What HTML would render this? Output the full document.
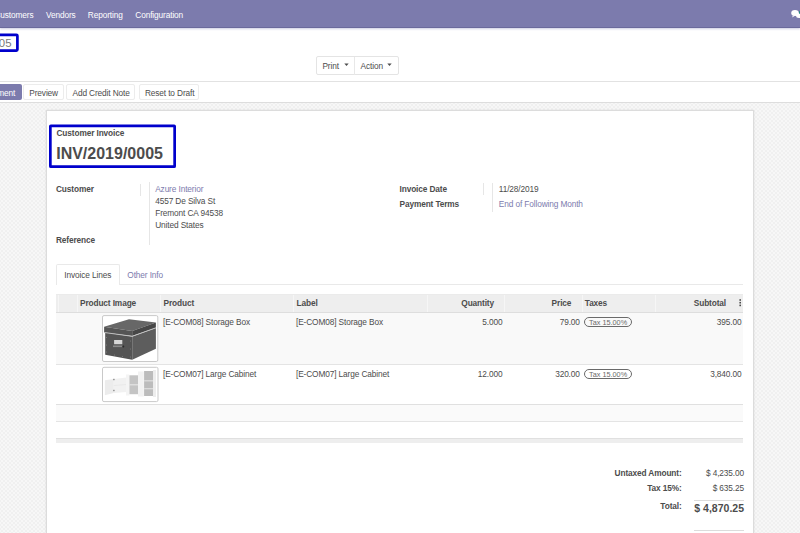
<!DOCTYPE html>
<html><head><meta charset="utf-8"><style>
html,body{margin:0;padding:0}
body{width:800px;height:533px;overflow:hidden;position:relative;background:#fff;font-family:"Liberation Sans",sans-serif;color:#4c4c4c}
.t{position:absolute;white-space:nowrap}
.r{position:absolute}
</style></head><body>
<div class="r" style="left:0px;top:0px;width:800px;height:26.5px;background:#7c7bad;border-bottom:1px solid #6b6a9c;box-shadow:0 1px 2px rgba(110,108,170,0.35)"></div>
<svg class="r" style="left:0;top:30px" width="24" height="26"><rect x="-10" y="4.85" width="27.4" height="15.7" rx="1" fill="none" stroke="#0000cc" stroke-width="2.7"/></svg>
<div class="r" style="left:316.3px;top:56.2px;width:83px;height:18.6px;border:1px solid #e4e4e4;border-radius:2px;box-sizing:border-box;background:#fff"></div>
<div class="r" style="left:354px;top:56.5px;width:1px;height:18px;background:#e8e8e8"></div>
<svg class="r" style="left:343.5px;top:63px" width="5" height="4"><path d="M0.3 0.6H4.7L2.5 3Z" fill="#4c4c4c"/></svg>
<svg class="r" style="left:387.3px;top:63px" width="5" height="4"><path d="M0.3 0.6H4.7L2.5 3Z" fill="#4c4c4c"/></svg>
<div class="r" style="left:0px;top:81px;width:800px;height:1px;background:#e2e2e2"></div>
<div class="r" style="left:-40px;top:84.4px;width:61.5px;height:15.6px;background:#7c7bad;border-radius:2px"></div>
<div class="r" style="left:23.1px;top:84.4px;width:40.9px;height:15.6px;border:1px solid #ececec;border-radius:2px;box-sizing:border-box;background:#fff"></div>
<div class="r" style="left:66.3px;top:84.4px;width:68.89999999999999px;height:15.6px;border:1px solid #ececec;border-radius:2px;box-sizing:border-box;background:#fff"></div>
<div class="r" style="left:138.7px;top:84.4px;width:60.60000000000002px;height:15.6px;border:1px solid #ececec;border-radius:2px;box-sizing:border-box;background:#fff"></div>
<div class="r" style="left:0px;top:102px;width:800px;height:431px;background-color:#f0f0f0;background-image:radial-gradient(circle,#f7f7f7 0.8px,transparent 1.3px),radial-gradient(circle,#f7f7f7 0.8px,transparent 1.3px);background-size:4px 4px;background-position:0 0,2px 2px;border-top:1px solid #dddddd"></div>
<div class="r" style="left:46.2px;top:110.2px;width:707.6px;height:440px;background:#fff;border:1px solid #dcdcdc;box-sizing:border-box;box-shadow:0 0 2px rgba(0,0,0,0.10)"></div>
<svg class="r" style="left:45px;top:120px" width="136" height="52"><rect x="5.35" y="5.85" width="124.3" height="40.8" rx="0.5" fill="none" stroke="#0000cc" stroke-width="2.7"/></svg>
<div class="r" style="left:140px;top:183.5px;width:1px;height:12.5px;background:#e6e6e6"></div>
<div class="r" style="left:149.3px;top:182px;width:1px;height:63px;background:#e6e6e6"></div>
<div class="r" style="left:483px;top:183px;width:1px;height:12px;background:#e6e6e6"></div>
<div class="r" style="left:492.2px;top:183px;width:1px;height:29px;background:#e6e6e6"></div>
<div class="r" style="left:56px;top:283.7px;width:687px;height:1px;background:#e9e9e9"></div>
<div class="r" style="left:56px;top:264px;width:64px;height:20.7px;background:#fff;border:1px solid #e9e9e9;border-bottom:none;border-radius:2px 2px 0 0;box-sizing:border-box"></div>
<div class="r" style="left:56px;top:294px;width:687px;height:18.5px;background:#eeeeee;border-top:1px solid #ebebeb;border-bottom:1px solid #dedede;box-sizing:border-box"></div>
<div class="r" style="left:58px;top:295px;width:1px;height:17px;background:#f6f6f6"></div>
<div class="r" style="left:76.6px;top:295px;width:1px;height:17px;background:#f6f6f6"></div>
<div class="r" style="left:160px;top:295px;width:1px;height:17px;background:#f6f6f6"></div>
<div class="r" style="left:293px;top:295px;width:1px;height:17px;background:#f6f6f6"></div>
<div class="r" style="left:427.3px;top:295px;width:1px;height:17px;background:#f6f6f6"></div>
<div class="r" style="left:504px;top:295px;width:1px;height:17px;background:#f6f6f6"></div>
<div class="r" style="left:582.3px;top:295px;width:1px;height:17px;background:#f6f6f6"></div>
<div class="r" style="left:655px;top:295px;width:1px;height:17px;background:#f6f6f6"></div>
<svg class="r" style="left:739px;top:299px" width="3" height="9"><rect x="0.4" y="0.2" width="1.6" height="1.6" fill="#4c4c4c"/><rect x="0.4" y="2.9" width="1.6" height="1.6" fill="#4c4c4c"/><rect x="0.4" y="5.6" width="1.6" height="1.6" fill="#4c4c4c"/></svg>
<div class="r" style="left:56px;top:312.5px;width:687px;height:52px;background:#f9f9f9"></div>
<div class="r" style="left:56px;top:364px;width:687px;height:1px;background:#e4e4e4"></div>
<div class="r" style="left:56px;top:405px;width:687px;height:16.5px;background:#fafafa"></div>
<div class="r" style="left:56px;top:404.3px;width:687px;height:1.2px;background:#e0e0e0"></div>
<div class="r" style="left:56px;top:421px;width:687px;height:1px;background:#e4e4e4"></div>
<div class="r" style="left:56px;top:437.5px;width:687px;height:5.3px;background:#eeeeee;border-top:1px solid #e0e0e0;box-sizing:border-box"></div>
<div class="r" style="left:584px;top:316.90000000000003px;width:48px;height:10.3px;border:1px solid #6a6a6a;border-radius:6px;box-sizing:border-box"></div>
<div class="r" style="left:584px;top:368.90000000000003px;width:48px;height:10.3px;border:1px solid #6a6a6a;border-radius:6px;box-sizing:border-box"></div>
<svg class="r" style="left:100px;top:313px" width="62" height="52" viewBox="100 313 62 52">
<rect x="102.5" y="315.6" width="55.3" height="45.9" rx="1.5" fill="#fff" stroke="#c9c9c9" stroke-width="1"/>
<polygon points="104.1,326.7 129,319.2 155.9,322.5 132.2,331" fill="#676767"/>
<polygon points="104.1,326.7 132.2,331 132.2,336.1 104.1,332.4" fill="#555"/>
<polygon points="132.2,331 155.9,322.5 155.9,327.7 132.2,336.1" fill="#474747"/>
<polygon points="105.2,332.6 132.2,336.4 132.2,359.7 105.2,354.7" fill="#545454"/>
<polygon points="132.2,336.4 155.9,328 155.9,348.7 132.2,359.7" fill="#5d5d5d"/>
<polyline points="104.3,332.5 132.2,336.3 155.9,327.8" fill="none" stroke="#c4c4c4" stroke-width="0.9"/>
<rect x="114.1" y="340" width="8.2" height="4.2" fill="#d6d6d6"/>
<rect x="113" y="345.5" width="9.5" height="1.6" fill="#8a8a8a"/>
<circle cx="123.3" cy="346.5" r="1" fill="#2a2a2a"/>
<circle cx="106.6" cy="337.5" r="0.45" fill="#999"/><circle cx="106.6" cy="345" r="0.45" fill="#999"/><circle cx="106.6" cy="352" r="0.45" fill="#999"/>
<circle cx="130.5" cy="341" r="0.45" fill="#999"/><circle cx="130.5" cy="349" r="0.45" fill="#999"/><circle cx="130.5" cy="357" r="0.45" fill="#999"/>
<circle cx="114.5" cy="355" r="0.45" fill="#999"/><circle cx="122.5" cy="356.5" r="0.45" fill="#999"/>
</svg>
<svg class="r" style="left:100px;top:364px" width="62" height="41" viewBox="100 364 62 41">
<rect x="102.5" y="367.3" width="55.5" height="34.3" rx="1.5" fill="#fff" stroke="#c9c9c9" stroke-width="1"/>
<polygon points="104.9,380.3 113.8,378.9 113.8,393 104.9,395.3" fill="#ececec"/>
<polygon points="113.8,378.9 126.5,377.5 126.5,392 113.8,393" fill="#f1f1f1"/>
<line x1="113.8" y1="385.5" x2="126.5" y2="384.5" stroke="#e2e2e2" stroke-width="0.6"/>
<rect x="113.3" y="378.8" width="1.2" height="1.4" fill="#777"/>
<rect x="113.3" y="389.8" width="1.2" height="1.4" fill="#777"/>
<rect x="126" y="374.5" width="3.4" height="21" fill="#f4f4f4"/>
<rect x="129.4" y="375.3" width="8.6" height="18.9" fill="#c4c4c4"/>
<rect x="129.4" y="384.2" width="8.6" height="1.2" fill="#e4e4e4"/>
<rect x="138" y="371.5" width="5.8" height="25" fill="#f2f2f2"/>
<rect x="144.1" y="371" width="8.9" height="25" fill="#bcbcbc"/>
<rect x="144.1" y="380.2" width="8.9" height="1.2" fill="#dedede"/>
<rect x="144.1" y="388.1" width="8.9" height="1.2" fill="#dedede"/>
<rect x="153" y="370" width="3" height="27" fill="#ededed"/>
</svg>
<div class="r" style="left:694px;top:500.3px;width:49.6px;height:1px;background:#dcdcdc"></div>
<div class="r" style="left:694px;top:530px;width:49.6px;height:1px;background:#dcdcdc"></div>
<svg class="r" style="left:790px;top:8px" width="11" height="12"><ellipse cx="5" cy="5" rx="3.8" ry="3" fill="#fff"/><path d="M3 7.5 L2 9.5 L5 7.8Z" fill="#fff"/><ellipse cx="9" cy="7.5" rx="3" ry="2.5" fill="#fff"/></svg>
<div class="r" style="left:798.8px;top:10.5px;width:3px;height:3.2px;background:#1f8a80;border-radius:1px"></div>
<div class="t" style="left:-5.6px;top:10.12px;font-size:8.3px;line-height:10px;font-weight:400;color:#ffffff;letter-spacing:-0.12px;">Customers</div>
<div class="t" style="left:46px;top:10.12px;font-size:8.3px;line-height:10px;font-weight:400;color:#ffffff;letter-spacing:-0.12px;">Vendors</div>
<div class="t" style="left:87.8px;top:10.12px;font-size:8.3px;line-height:10px;font-weight:400;color:#ffffff;letter-spacing:-0.12px;">Reporting</div>
<div class="t" style="left:135.3px;top:10.12px;font-size:8.3px;line-height:10px;font-weight:400;color:#ffffff;letter-spacing:-0.12px;">Configuration</div>
<div class="t" style="left:-1.2px;top:35.75px;font-size:11.4px;line-height:14px;font-weight:400;color:#7a7a7a;">05</div>
<div class="t" style="left:322.4px;top:61.32px;font-size:8.3px;line-height:10px;font-weight:400;color:#4c4c4c;letter-spacing:-0.12px;">Print</div>
<div class="t" style="left:360.6px;top:61.32px;font-size:8.3px;line-height:10px;font-weight:400;color:#4c4c4c;letter-spacing:-0.12px;">Action</div>
<div class="t" style="right:784.8px;top:88.12px;font-size:8.3px;line-height:10px;font-weight:400;color:#ffffff;letter-spacing:-0.12px;">Register Payment</div>
<div class="t" style="left:29.3px;top:88.12px;font-size:8.3px;line-height:10px;font-weight:400;color:#4c4c4c;letter-spacing:-0.12px;">Preview</div>
<div class="t" style="left:72.5px;top:88.12px;font-size:8.3px;line-height:10px;font-weight:400;color:#4c4c4c;letter-spacing:-0.12px;">Add Credit Note</div>
<div class="t" style="left:144.89999999999998px;top:88.12px;font-size:8.3px;line-height:10px;font-weight:400;color:#4c4c4c;letter-spacing:-0.12px;">Reset to Draft</div>
<div class="t" style="left:56.5px;top:127.92px;font-size:8.3px;line-height:10px;font-weight:700;color:#4c4c4c;letter-spacing:-0.12px;">Customer Invoice</div>
<div class="t" style="left:56.2px;top:144.36px;font-size:16px;line-height:20px;font-weight:700;color:#4c4c4c;">INV/2019/0005</div>
<div class="t" style="left:56px;top:184.42px;font-size:8.3px;line-height:10px;font-weight:700;color:#4c4c4c;letter-spacing:-0.12px;">Customer</div>
<div class="t" style="left:56px;top:234.62px;font-size:8.3px;line-height:10px;font-weight:700;color:#4c4c4c;letter-spacing:-0.12px;">Reference</div>
<div class="t" style="left:155.2px;top:184.42px;font-size:8.3px;line-height:10px;font-weight:400;color:#7c7bad;letter-spacing:-0.12px;">Azure Interior</div>
<div class="t" style="left:155.2px;top:196.32px;font-size:8.3px;line-height:10px;font-weight:400;color:#4c4c4c;letter-spacing:-0.12px;">4557 De Silva St</div>
<div class="t" style="left:155.2px;top:207.92px;font-size:8.3px;line-height:10px;font-weight:400;color:#4c4c4c;letter-spacing:-0.12px;">Fremont CA 94538</div>
<div class="t" style="left:155.2px;top:219.52px;font-size:8.3px;line-height:10px;font-weight:400;color:#4c4c4c;letter-spacing:-0.12px;">United States</div>
<div class="t" style="left:399.5px;top:183.62px;font-size:8.3px;line-height:10px;font-weight:700;color:#4c4c4c;letter-spacing:-0.12px;">Invoice Date</div>
<div class="t" style="left:399.5px;top:199.12px;font-size:8.3px;line-height:10px;font-weight:700;color:#4c4c4c;letter-spacing:-0.12px;">Payment Terms</div>
<div class="t" style="left:498.8px;top:183.62px;font-size:8.3px;line-height:10px;font-weight:400;color:#4c4c4c;letter-spacing:-0.12px;">11/28/2019</div>
<div class="t" style="left:498.8px;top:199.12px;font-size:8.3px;line-height:10px;font-weight:400;color:#7c7bad;letter-spacing:-0.12px;">End of Following Month</div>
<div class="t" style="left:64.3px;top:269.62px;font-size:8.3px;line-height:10px;font-weight:400;color:#4c4c4c;letter-spacing:-0.12px;">Invoice Lines</div>
<div class="t" style="left:127.3px;top:269.62px;font-size:8.3px;line-height:10px;font-weight:400;color:#7c7bad;letter-spacing:-0.12px;">Other Info</div>
<div class="t" style="left:80px;top:297.92px;font-size:8.3px;line-height:10px;font-weight:700;color:#4c4c4c;letter-spacing:-0.12px;">Product Image</div>
<div class="t" style="left:163.6px;top:297.92px;font-size:8.3px;line-height:10px;font-weight:700;color:#4c4c4c;letter-spacing:-0.12px;">Product</div>
<div class="t" style="left:296.5px;top:297.92px;font-size:8.3px;line-height:10px;font-weight:700;color:#4c4c4c;letter-spacing:-0.12px;">Label</div>
<div class="t" style="right:306px;top:297.92px;font-size:8.3px;line-height:10px;font-weight:700;color:#4c4c4c;letter-spacing:-0.12px;">Quantity</div>
<div class="t" style="right:228.70000000000005px;top:297.92px;font-size:8.3px;line-height:10px;font-weight:700;color:#4c4c4c;letter-spacing:-0.12px;">Price</div>
<div class="t" style="left:584.8px;top:297.92px;font-size:8.3px;line-height:10px;font-weight:700;color:#4c4c4c;letter-spacing:-0.12px;">Taxes</div>
<div class="t" style="right:74px;top:297.92px;font-size:8.3px;line-height:10px;font-weight:700;color:#4c4c4c;letter-spacing:-0.12px;">Subtotal</div>
<div class="t" style="left:163px;top:316.92px;font-size:8.3px;line-height:10px;font-weight:400;color:#4c4c4c;letter-spacing:-0.12px;">[E-COM08] Storage Box</div>
<div class="t" style="left:296px;top:316.92px;font-size:8.3px;line-height:10px;font-weight:400;color:#4c4c4c;letter-spacing:-0.12px;">[E-COM08] Storage Box</div>
<div class="t" style="right:297.5px;top:316.92px;font-size:8.3px;line-height:10px;font-weight:400;color:#4c4c4c;letter-spacing:-0.12px;">5.000</div>
<div class="t" style="right:220.20000000000005px;top:316.92px;font-size:8.3px;line-height:10px;font-weight:400;color:#4c4c4c;letter-spacing:-0.12px;">79.00</div>
<div class="t" style="right:58.5px;top:316.92px;font-size:8.3px;line-height:10px;font-weight:400;color:#4c4c4c;letter-spacing:-0.12px;">395.00</div>
<div class="t" style="left:589px;top:317.77px;font-size:7.3px;line-height:9px;font-weight:400;color:#6a6a6a;">Tax 15.00%</div>
<div class="t" style="left:163px;top:368.92px;font-size:8.3px;line-height:10px;font-weight:400;color:#4c4c4c;letter-spacing:-0.12px;">[E-COM07] Large Cabinet</div>
<div class="t" style="left:296px;top:368.92px;font-size:8.3px;line-height:10px;font-weight:400;color:#4c4c4c;letter-spacing:-0.12px;">[E-COM07] Large Cabinet</div>
<div class="t" style="right:297.5px;top:368.92px;font-size:8.3px;line-height:10px;font-weight:400;color:#4c4c4c;letter-spacing:-0.12px;">12.000</div>
<div class="t" style="right:220.20000000000005px;top:368.92px;font-size:8.3px;line-height:10px;font-weight:400;color:#4c4c4c;letter-spacing:-0.12px;">320.00</div>
<div class="t" style="right:58.5px;top:368.92px;font-size:8.3px;line-height:10px;font-weight:400;color:#4c4c4c;letter-spacing:-0.12px;">3,840.00</div>
<div class="t" style="left:589px;top:369.77px;font-size:7.3px;line-height:9px;font-weight:400;color:#6a6a6a;">Tax 15.00%</div>
<div class="t" style="right:118.39999999999998px;top:467.72px;font-size:8.3px;line-height:10px;font-weight:700;color:#4c4c4c;letter-spacing:-0.12px;">Untaxed Amount:</div>
<div class="t" style="right:56px;top:467.72px;font-size:8.3px;line-height:10px;font-weight:400;color:#4c4c4c;letter-spacing:-0.12px;">$ 4,235.00</div>
<div class="t" style="right:118.39999999999998px;top:483.12px;font-size:8.3px;line-height:10px;font-weight:700;color:#4c4c4c;letter-spacing:-0.12px;">Tax 15%:</div>
<div class="t" style="right:56px;top:483.12px;font-size:8.3px;line-height:10px;font-weight:400;color:#4c4c4c;letter-spacing:-0.12px;">$ 635.25</div>
<div class="t" style="right:118.39999999999998px;top:500.92px;font-size:8.3px;line-height:10px;font-weight:700;color:#4c4c4c;letter-spacing:-0.12px;">Total:</div>
<div class="t" style="right:56px;top:502.16px;font-size:10.5px;line-height:13px;font-weight:700;color:#4c4c4c;">$ 4,870.25</div>
</body></html>
